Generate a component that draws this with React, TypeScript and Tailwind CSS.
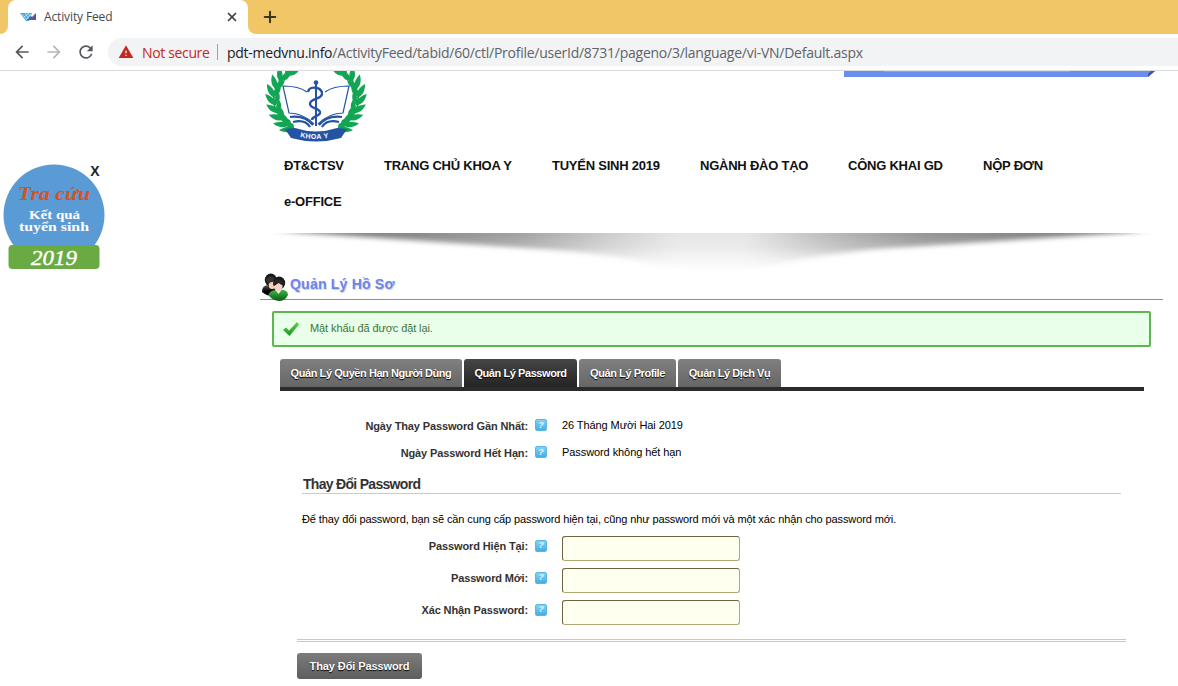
import React from "react";
import { MdArrowBack, MdArrowForward, MdRefresh, MdWarning } from "react-icons/md";
import { Plus, X } from "lucide-react";

function Favicon() {
  return (
    <svg className="h-[10px] w-4 shrink-0" viewBox="0 0 16 10">
      <path d="M0 1h12L9 9H6z" fill="#3fa7d6" />
      <path d="M2 2l5 6M5 1l4 6M8 1l2 3M4 5l5-4M6 8l5-6" stroke="#d9f0fa" strokeWidth=".7" />
      <path d="M16 1v7H7l4-4 1 1z" fill="#5d5799" />
    </svg>
  );
}

const leaves = [
  [28, 58, -64], [22, 54, -54], [17, 48, -42], [13, 41, -28], [10, 33, -14],
  [9, 25, 0], [11, 17, 14], [15, 9, 28], [22, 3, 42],
];

function Laurel() {
  return (
    <g fill="#12a553">
      <path d="M29-6Q-1 20 13 43Q18 52 29 59" fill="none" stroke="#12a553" strokeWidth="1.600" />
      {leaves.map(([x, y, r], i) => (
        <g key={i} transform={`translate(${x} ${y}) rotate(${r})`}>
          <path transform="rotate(-30)" d="M0 2C-4-3-3.600-8 0-14C3.200-8 4-3 0 2z" />
          <path transform="rotate(34)" d="M0 2C-3.200-3-3.200-7 0-12C3.600-7 3.600-3 0 2z" />
        </g>
      ))}
    </g>
  );
}

function Logo() {
  return (
    <svg className="ml-[5px] h-[71px] w-[102px] shrink-0" viewBox="0 0 102 71">
      <Laurel />
      <g transform="translate(102 0) scale(-1 1)"><Laurel /></g>
      <path d="M18 16Q36 12 45 24L51 29L57 24Q66 12 84 16L78 45L76 52L57 57H45L26 52L24 45z" fill="#fff" />
      <g fill="none" stroke="#2553a4">
        <path d="M42 21Q34 15 18 15L24 42Q38 42 49 53M60 21Q68 15 84 15L78 42Q64 42 53 53" strokeWidth="1.2" />
        <path d="M25 46Q40 44 48 54M28 51Q40 48 45 56M77 46Q62 44 54 54M74 51Q62 48 57 56" strokeWidth="2.2" />
        <path d="M51 12V55" strokeWidth="2" />
        <path d="M43 21C44 14 58 16 57 23C56 29 45 27 45 33C45 38 56 37 55 42C54 46 47 45 47 49" strokeWidth="2.4" />
      </g>
      <circle cx="51" cy="11.500" r="2.300" fill="#2553a4" />
      <path d="M20 58L30 57Q51 64 72 57L82 58L76 67Q51 74 26 67z" fill="#2553a4" />
      <path id="ribbon" d="M35 66Q51 70 69 65.500" fill="none" />
      <text fill="#fff" className="text-[7px] font-bold [font-family:'Liberation_Sans',sans-serif]" letterSpacing=".4">
        <textPath href="#ribbon">KHOA Y</textPath>
      </text>
    </svg>
  );
}

function Badge() {
  return (
    <svg className="mt-[89px] block h-[112px] w-[110px]" viewBox="0 160 110 112">
      <circle cx="54" cy="215" r="50.5" fill="#5b9bd5" />
      <circle cx="96" cy="170" r="10" fill="#fff" />
      <rect x="0" y="246" width="110" height="26" fill="#fff" />
      <rect x="8.500" y="245" width="91" height="24" rx="4" fill="#6aaa43" />
      <text x="95" y="176" textAnchor="middle" fill="#222" className="text-[14px] font-bold [font-family:'Liberation_Sans',sans-serif]">X</text>
      <g className="[font-family:'Liberation_Serif',serif]">
        <text x="18" y="200" fill="#d5541c" textLength="72" lengthAdjust="spacingAndGlyphs" className="text-[19px] font-bold italic">Tra cứu</text>
        <text x="29" y="219" fill="#fff" textLength="51" lengthAdjust="spacingAndGlyphs" className="text-[12.5px] font-bold">Kết quả</text>
        <text x="19" y="231" fill="#fff" textLength="70" lengthAdjust="spacingAndGlyphs" className="text-[12.5px] font-bold">tuyển sinh</text>
        <text x="31" y="265" fill="#fff" textLength="46" lengthAdjust="spacingAndGlyphs" className="text-[21px] italic" stroke="#fff" strokeWidth=".4">2019</text>
      </g>
    </svg>
  );
}

function Swoosh() {
  return (
    <svg className="mt-[12px] block h-[40px] w-[903px]" viewBox="0 0 903 40">
      <defs>
        <linearGradient id="tone">
          <stop offset="0" stopColor="#707070" />
          <stop offset=".15" stopColor="#858585" />
          <stop offset=".28" stopColor="#a0a0a0" />
          <stop offset=".38" stopColor="#cbcbcb" />
          <stop offset=".46" stopColor="#e6e6e6" />
          <stop offset=".54" stopColor="#e6e6e6" />
          <stop offset=".64" stopColor="#b8b8b8" />
          <stop offset=".74" stopColor="#959595" />
          <stop offset="1" stopColor="#707070" />
        </linearGradient>
        <linearGradient id="fade" x1="0" y1="0" x2="0" y2="1">
          <stop offset="0" stopColor="#fff" />
          <stop offset=".35" stopColor="#fff" stopOpacity=".8" />
          <stop offset=".65" stopColor="#fff" stopOpacity=".4" />
          <stop offset="1" stopColor="#fff" stopOpacity="0" />
        </linearGradient>
        <filter id="soft" x="-5%" y="-50%" width="110%" height="200%"><feGaussianBlur stdDeviation="8 2.600" /></filter>
        <mask id="down"><rect y="1" width="903" height="39" fill="url(#fade)" /></mask>
      </defs>
      <g mask="url(#down)">
        <path d="M18-3L32 0L290 18Q370 24 410 38H500Q540 25 620 17L874 0L884-3z" fill="url(#tone)" filter="url(#soft)" />
      </g>
    </svg>
  );
}

function People() {
  return (
    <svg className="ml-[2px] h-[28px] w-[26px] shrink-0 translate-y-[2px]" viewBox="0 0 28 28" preserveAspectRatio="none">
      <defs>
        <linearGradient id="coat" x1="0" y1="0" x2="0" y2="1"><stop stopColor="#555" /><stop offset=".6" stopColor="#000" /></linearGradient>
        <linearGradient id="shirt" x1="0" y1="0" x2="0" y2="1"><stop stopColor="#43b649" /><stop offset="1" stopColor="#075c14" /></linearGradient>
      </defs>
      <path d="M0 19Q0 12 7 12Q14 12 17 19Q10 25 3 21z" fill="url(#coat)" />
      <circle cx="9.500" cy="7" r="6.500" fill="#161616" />
      <ellipse cx="11" cy="11.500" rx="3.800" ry="4.600" fill="#f2cfb8" />
      <path d="M4 7Q8 0 15 6L14 9Q10 8 7 11z" fill="#333" />
      <path d="M7 22Q8 17 17 17Q28 16 28 22Q25 28 18 28Q10 27 7 22z" fill="url(#shirt)" />
      <path d="M14 17L18 21L21 17z" fill="#f6e5da" />
      <circle cx="18.500" cy="10" r="6.500" fill="#191919" />
      <ellipse cx="17.500" cy="13.500" rx="4.600" ry="4.600" fill="#f5d5c0" />
      <path d="M12 12Q12 5 21 7L25 11L21 12L18 10L13 13z" fill="#252525" />
    </svg>
  );
}

function Check() {
  return (
    <svg className="ml-2 mr-2.5 h-4 w-[18px] shrink-0" viewBox="0 0 18 16">
      <defs><linearGradient id="tick" x1="0" y1="0" x2="0" y2="1"><stop stopColor="#5fd24a" /><stop offset="1" stopColor="#169a22" /></linearGradient></defs>
      <path d="M1 9L4 6.500L7 9.500L15 1L17 3.500L7.500 15z" fill="url(#tick)" />
    </svg>
  );
}

function Help() {
  return (
    <span className="flex h-3 w-3 shrink-0 items-center justify-center rounded-[2px] border border-[#5cb6e4] bg-linear-to-b from-[#7fd2f5] to-[#45aee6] text-[9px] leading-none font-bold text-[#e8f7ff] italic">
      ?
    </span>
  );
}

const nav = [
  { label: "ĐT&CTSV", cls: "w-[100px]" },
  { label: "TRANG CHỦ KHOA Y", cls: "w-[168px]" },
  { label: "TUYỂN SINH 2019", cls: "w-[148px]" },
  { label: "NGÀNH ĐÀO TẠO", cls: "w-[148px]" },
  { label: "CÔNG KHAI GD", cls: "w-[135px]" },
  { label: "NỘP ĐƠN", cls: "w-[100px]" },
  { label: "e-OFFICE", cls: "w-[100px]" },
];

const tabs = [
  { label: "Quản Lý Quyền Hạn Người Dùng", cls: "w-[182px] from-[#808080] to-[#666]" },
  { label: "Quản Lý Password", cls: "w-[113px] from-[#464646] to-[#242424]" },
  { label: "Quản Lý Profile", cls: "w-[97px] from-[#808080] to-[#666]" },
  { label: "Quản Lý Dịch Vụ", cls: "w-[103px] from-[#808080] to-[#666]" },
];

function Row({ label, value, cls }: { label: string; value?: string; cls: string }) {
  return (
    <div className={"flex items-center " + cls}>
      <div className={value ? "flex items-center gap-[7px] pb-px" : "flex items-center gap-[7px] pb-[5px]"}>
        <label className="w-[268px] pt-px text-right text-[11px] leading-4 font-bold tracking-[-0.130px] text-[#333]">{label}</label>
        <Help />
      </div>
      {value ? (
        <span className="ml-[15px] text-[11px] tracking-[-0.080px] text-black">{value}</span>
      ) : (
        <input type="password" className="ml-[15px] h-[25px] w-[178px] rounded-[3px] border border-[#b0a976] border-t-[#6c6544] border-l-[#6c6544] bg-[#fffff0] outline-none" />
      )}
    </div>
  );
}

export default function App() {
  return (
    <div className="flex h-[686px] w-[1178px] flex-col overflow-hidden bg-white whitespace-nowrap [font-family:'Liberation_Sans',Arial,sans-serif]">
      <div className="flex h-[34px] shrink-0 bg-[#f0c667] [font-family:'Open_Sans',sans-serif]">
        <div className="flex w-2 bg-white"><div className="w-2 rounded-br-lg bg-[#f0c667]" /></div>
        <div className="flex w-[240px] items-center rounded-t-lg bg-white pl-3">
          <Favicon />
          <span className="ml-2 flex-1 text-[12px] tracking-[-0.130px] text-[#45494d]">Activity Feed</span>
          <X className="mr-[9px] size-[14px] text-[#3c4043]" strokeWidth={3} />
        </div>
        <div className="flex w-2 bg-white"><div className="w-2 rounded-bl-lg bg-[#f0c667]" /></div>
        <Plus className="mt-[8px] ml-[5px] size-[18px] text-[#3a3420]" strokeWidth={2.7} />
      </div>
      <div className="flex h-[37px] shrink-0 items-center border-b border-[#d8dadc] bg-white [font-family:'Open_Sans',sans-serif]">
        <MdArrowBack className="ml-3 size-5 text-[#55585c]" />
        <MdArrowForward className="ml-3 size-5 text-[#b5b7ba]" />
        <MdRefresh className="ml-3 size-5 text-[#55585c]" />
        <div className="ml-3 flex h-7 flex-1 items-center rounded-l-full bg-[#f1f3f4] pl-[10px] text-[14px]">
          <MdWarning className="size-4 text-[#c5281c]" />
          <span className="ml-[8px] w-[67px] tracking-[-0.350px] text-[#c5281c]">Not secure</span>
          <span className="mr-[9px] ml-[8px] h-4 w-px bg-[#a0a3a7]" />
          <span className="tracking-[-0.255px] text-[#5f6368]"><span className="text-[#202124]">pdt-medvnu.info</span>/ActivityFeed/tabid/60/ctl/Profile/userId/8731/pageno/3/language/vi-VN/Default.aspx</span>
        </div>
      </div>
      <div className="flex flex-1">
        <aside className="w-[260px] shrink-0"><Badge /></aside>
        <main className="w-[903px]">
          <div className="flex h-[71px] justify-between">
            <Logo />
            <svg className="mr-[8px] h-[6px] w-[311px]" viewBox="0 0 311 6">
              <path d="M0 0H311L304 6H0z" fill="#6b8df0" />
              <path d="M307 0H311L304 6V3z" fill="#3c57a8" />
              <path d="M40 0H226" stroke="#a9bcf7" />
            </svg>
          </div>
          <nav className="mt-[6px] flex w-[860px] flex-wrap pl-6 text-[13px] font-bold tracking-[-0.230px] text-[#111]">
            {nav.map((n) => (
              <a key={n.label} className={"h-9 leading-9 " + n.cls}>{n.label}</a>
            ))}
          </nav>
          <Swoosh />
          <div className="-mt-px flex h-[29px] items-end border-b border-[#6f8df0]">
            <People />
            <h1 className="mb-[7px] ml-[2px] text-[14px] leading-4 font-bold tracking-[0.220px] text-[#6b85ec] [text-shadow:1px_1px_1px_#c6cbd8]">Quản Lý Hồ Sơ</h1>
          </div>
          <div className="mt-[11px] ml-3 flex h-[36px] w-[879px] items-center rounded-[2px] border-2 border-[#5eb650] bg-[#e9ffe9] text-[11px] tracking-[-0.100px] text-[#40743a]">
            <Check />
            <span className="pb-[2px]">Mật khẩu đã được đặt lại.</span>
          </div>
          <div className="mt-[12px] ml-5 flex h-[32px] w-[864px] gap-[2px] border-b-4 border-[#2b2b2b]">
            {tabs.map((t) => (
              <div key={t.label} className={"flex items-center justify-center rounded-t-[3px] bg-linear-to-b text-[11px] font-bold tracking-[-0.430px] text-white [text-shadow:0_1px_1px_#000] " + t.cls}>{t.label}</div>
            ))}
          </div>
          <Row label="Ngày Thay Password Gần Nhất:" value="26 Tháng Mười Hai 2019" cls="mt-[21px] h-[27px]" />
          <Row label="Ngày Password Hết Hạn:" value="Password không hết hạn" cls="h-[27px]" />
          <h2 className="mt-[9px] ml-[42px] h-[19px] w-[819px] border-b border-[#ccc] pl-px text-[14px] leading-[18px] font-bold tracking-[-0.700px] text-[#333]">Thay Đổi Password</h2>
          <p className="mt-[16px] ml-[42px] h-[18px] text-[11px] leading-[18px] tracking-[-0.105px] text-black">Để thay đổi password, bạn sẽ cần cung cấp password hiện tại, cũng như password mới và một xác nhận cho password mới.</p>
          <Row label="Password Hiện Tại:" cls="mt-[4px] h-8" />
          <Row label="Password Mới:" cls="h-8" />
          <Row label="Xác Nhận Password:" cls="h-8" />
          <div className="mt-[11px] ml-[37px] h-[3px] w-[829px] border-y border-[#c8c8c8]" />
          <button className="mt-[11px] ml-[37px] block h-[26px] w-[125px] rounded-[3px] bg-linear-to-b from-[#7c7c7c] to-[#5e5e5e] text-[11px] font-bold tracking-[-0.100px] text-white [text-shadow:0_1px_1px_#000]">Thay Đổi Password</button>
        </main>
      </div>
    </div>
  );
}
